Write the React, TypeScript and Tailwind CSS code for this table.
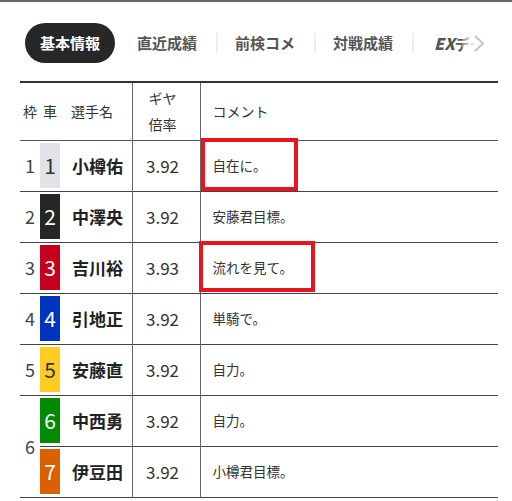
type Racer = {
  frame: number;
  car: number;
  name: string;
  gear: string;
  comment: string;
  marked?: 'short' | 'long';
};

const racers: Racer[] = [
  { frame: 1, car: 1, name: '小樽佑', gear: '3.92', comment: '自在に。', marked: 'short' },
  { frame: 2, car: 2, name: '中澤央', gear: '3.92', comment: '安藤君目標。' },
  { frame: 3, car: 3, name: '吉川裕', gear: '3.93', comment: '流れを見て。', marked: 'long' },
  { frame: 4, car: 4, name: '引地正', gear: '3.92', comment: '単騎で。' },
  { frame: 5, car: 5, name: '安藤直', gear: '3.92', comment: '自力。' },
  { frame: 6, car: 6, name: '中西勇', gear: '3.92', comment: '自力。' },
  { frame: 6, car: 7, name: '伊豆田', gear: '3.92', comment: '小樽君目標。' },
];

const carColors: Record<number, string> = {
  1: 'bg-[#e2e3e9] text-[#333]',
  2: 'bg-[#262626] text-white',
  3: 'bg-[#c4001c] text-white',
  4: 'bg-[#0033bf] text-white',
  5: 'bg-[#ffcd22] text-[#333]',
  6: 'bg-[#008a00] text-white',
  7: 'bg-[#db6000] text-white',
};

const tabs = ['直近成績', '前検コメ', '対戦成績'];

function TabBar() {
  return (
    <div className="relative flex items-center pt-[21px] pl-[25px] overflow-hidden">
      <div className="flex h-[40px] shrink-0 items-center rounded-full bg-[#272727] px-[15px] text-[15px] font-bold text-white">
        基本情報
      </div>
      <div className="ml-[22px] flex shrink-0 items-center text-[15px] font-bold text-[#555]">
        {tabs.map((t) => (
          <div key={t} className="flex items-center">
            <span>{t}</span>
            <span className="ml-[19px] mr-[17px] h-[20px] w-[2px] bg-[#eceef2]" />
          </div>
        ))}
        <span className="ml-[3px] whitespace-nowrap">
          <span className="text-[16px] font-extrabold italic">EX</span>データ
        </span>
      </div>
      {/* fade + arrow */}
      <div className="absolute right-0 top-[21px] flex h-[40px] w-[50px] items-center bg-[linear-gradient(to_right,rgba(255,255,255,0.3),#fff_14px)]">
        <svg width="12" height="17" viewBox="0 0 12 17" className="ml-[11px]" fill="none">
          <polyline points="2,1 10,8.5 2,16" stroke="#c6c6c6" strokeWidth="2" />
        </svg>
      </div>
    </div>
  );
}

export default function App() {
  return (
    <div
      className="h-[501px] w-[512px] overflow-hidden bg-white text-[#333]"
      style={{ fontFamily: '"Noto Sans CJK JP", "Noto Sans", sans-serif' }}
    >
      <div className="h-[2px] bg-[#666]" />
      <TabBar />

      <div className="mt-[18px] px-[20px]">
        <table className="w-[478px] table-fixed border-collapse">
          <colgroup>
            <col className="w-[20px]" />
            <col className="w-[20px]" />
            <col className="w-[72px]" />
            <col className="w-[68px]" />
            <col className="w-[298px]" />
          </colgroup>
          <thead>
            <tr className="h-[58px] border-t-2 border-b border-t-[#333] border-b-[#555] text-[14px] font-normal">
              <th className="p-0 text-center font-normal">枠</th>
              <th className="p-0 text-center font-normal">車</th>
              <th className="p-0 pl-[11px] text-left font-normal">選手名</th>
              <th className="border-x border-[#666] p-0 pr-[7px] text-center font-normal leading-[26px]">
                ギヤ
                <br />
                倍率
              </th>
              <th className="p-0 pl-[12px] text-left font-normal">コメント</th>
            </tr>
          </thead>
          <tbody>
            {racers.map((r) => (
              <tr key={r.car} className="h-[51px] border-b border-[#444]">
                {r.car === 7 ? null : (
                  <td
                    rowSpan={r.car === 6 ? 2 : 1}
                    className="border-b border-[#444] p-0 text-center text-[18px] font-normal text-[#444]"
                  >
                    {r.frame}
                  </td>
                )}
                <td className="p-0 align-middle">
                  <div
                    className={`flex h-[45px] w-[20px] items-center justify-center text-[21px] leading-none ${carColors[r.car]}`}
                  >
                    {r.car}
                  </div>
                </td>
                <td className="p-0 pl-[12px] text-[17px] font-bold text-[#222]">{r.name}</td>
                <td className="border-x border-[#666] p-0 pr-[7px] text-center text-[17px] text-[#333]">
                  {r.gear}
                </td>
                <td className="relative p-0 pl-[12px] text-[13.5px] text-[#333]">
                  {r.comment}
                  {r.marked === 'short' && (
                    <div className="absolute left-0 top-[-3px] h-[53px] w-[97px] border-4 border-[#e8141f]" />
                  )}
                  {r.marked === 'long' && (
                    <div className="absolute left-[-2px] top-[-2px] h-[51px] w-[116px] border-4 border-[#e8141f]" />
                  )}
                </td>
              </tr>
            ))}
          </tbody>
        </table>
      </div>
    </div>
  );
}
